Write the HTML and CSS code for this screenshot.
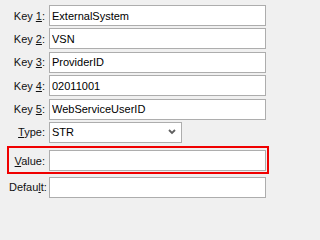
FILE: index.html
```html
<!DOCTYPE html>
<html>
<head>
<meta charset="utf-8">
<link rel="stylesheet" href="styles.css">
</head>
<body>
<div class="form">
  <div class="row"><label class="lbl">Key <u>1</u>:</label><input class="field" value="ExternalSystem"></div>
  <div class="row"><label class="lbl">Key <u>2</u>:</label><input class="field" value="VSN"></div>
  <div class="row"><label class="lbl">Key <u>3</u>:</label><input class="field" value="ProviderID"></div>
  <div class="row"><label class="lbl">Key <u>4</u>:</label><input class="field" value="02011001"></div>
  <div class="row"><label class="lbl">Key <u>5</u>:</label><input class="field" value="WebServiceUserID"></div>
  <div class="row"><label class="lbl"><u>T</u>ype:</label>
    <div class="select"><span>STR</span>
      <svg class="chev" width="8" height="6" viewBox="0 0 8 6"><polyline points="1,1 4,4 7,1" fill="none" stroke="#5f5f5f" stroke-width="1.8"/></svg>
    </div>
  </div>
  <div class="row highlight"><label class="lbl"><u>V</u>alue:</label><input class="field" value=""></div>
  <div class="row"><label class="lbl">Defau<u>l</u>t:</label><input class="field" value=""></div>
</div>
</body>
</html>
```

FILE: styles.css
```css
html, body {
  margin: 0;
  padding: 0;
  background: #f0f0f0;
  font-family: "Liberation Sans", Arial, sans-serif;
  font-size: 11px;
  color: #000;
}

.form {
  display: flex;
  flex-direction: column;
  gap: 2.4px;
  width: 257px;
  padding: 5px 0 0 9px;
}

.row {
  display: flex;
  align-items: center;
  gap: 4px;
  height: 21px;
}

.lbl {
  width: 36px;
  text-align: right;
  white-space: nowrap;
  color: #111;
}

.field {
  box-sizing: border-box;
  width: 217px;
  height: 21px;
  margin: 0;
  padding: 0 2px;
  border: 1px solid #adadad;
  background: #fff;
  font-family: inherit;
  font-size: 11px;
  color: #000;
  outline: none;
}

.select {
  box-sizing: border-box;
  width: 133px;
  height: 21px;
  border: 1px solid #adadad;
  background: #fff;
  display: flex;
  align-items: center;
  justify-content: space-between;
  padding: 0 5px 0 2px;
}

.chev {
  display: block;
}

.highlight {
  height: 21px;
  padding: 2px 1px 1px 0;
  margin: 1px -3px 0 -2px;
  border: 2px solid #f00000;
}
```
